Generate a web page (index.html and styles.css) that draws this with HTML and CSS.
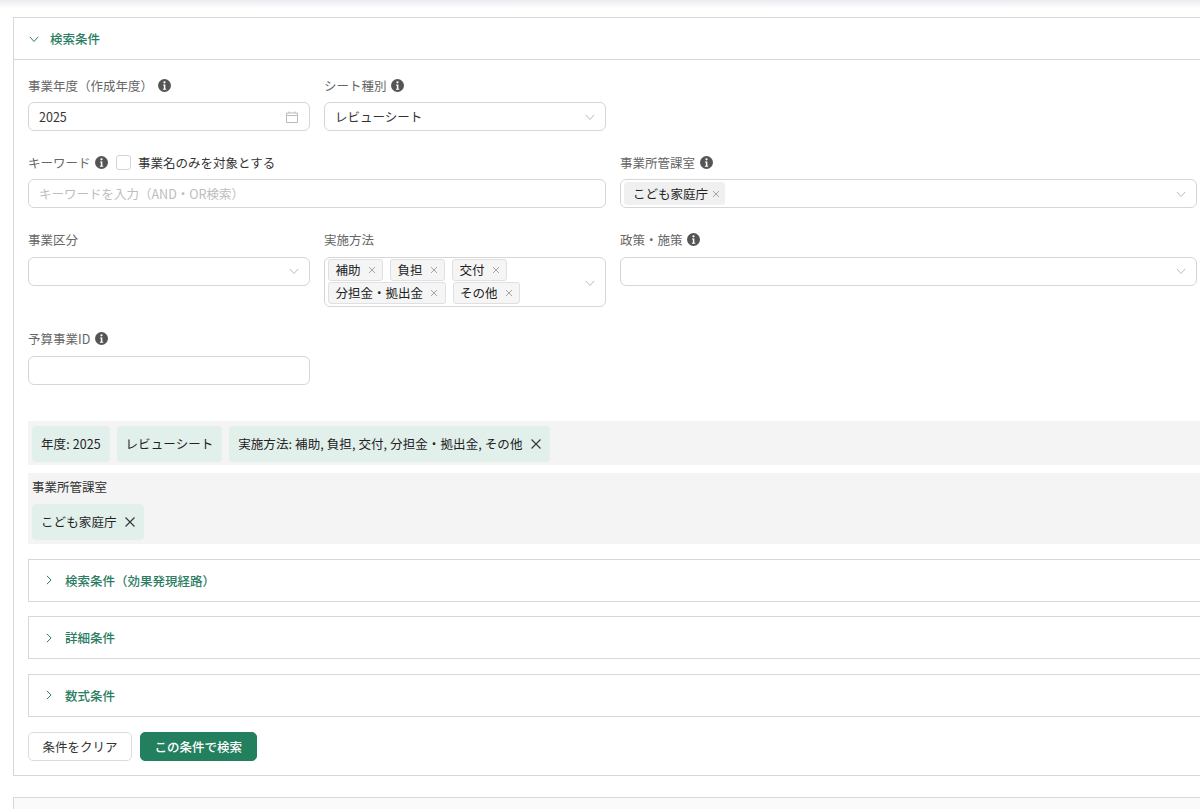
FILE: index.html
```html
<!DOCTYPE html>
<html lang="ja">
  <head>
    <meta charset="UTF-8" />
    <meta name="viewport" content="width=device-width, initial-scale=1.0" />
    <title>検索条件</title>
    <link rel="stylesheet" href="styles.css">
  </head>
  <body>
    <svg class="icon-defs" width="0" height="0">
      <defs>
        <symbol id="info" viewBox="0 0 12 12">
          <circle cx="6" cy="6" r="6" fill="#555"/>
          <circle cx="6" cy="3.1" r="1.05" fill="#fff"/>
          <path d="M4.6 5h2.2v3.9h.8V10H4.5V8.900h.9V6.100h-.8z" fill="#fff"/>
        </symbol>
        <symbol id="down" viewBox="0 0 12 12">
          <path d="M1 3.500l5 5.500 5-5.500" fill="none" stroke="currentColor" stroke-width="1.200"/>
        </symbol>
        <symbol id="right" viewBox="0 0 12 12">
          <path d="M3.500 1l5 5-5 5" fill="none" stroke="currentColor" stroke-width="1.200"/>
        </symbol>
        <symbol id="close" viewBox="0 0 12 12">
          <path d="M1.500 1.500l9 9M10.500 1.500l-9 9" fill="none" stroke="currentColor" stroke-width="1.100"/>
        </symbol>
      </defs>
    </svg>

    <div class="top-shade"></div>

    <section class="panel">
      <div class="panel-head">
        <svg class="head-arrow"><use href="#down"/></svg>
        <span>検索条件</span>
      </div>

      <div class="panel-body">
        <div class="form-grid">
          <div class="field">
            <div class="label">事業年度（作成年度）<svg class="info"><use href="#info"/></svg></div>
            <div class="input">
              <span class="value">2025</span>
              <svg class="calendar" viewBox="0 0 12 12">
                <path d="M.5 2h11v9.500H.5zM.5 4.500h11M3 .5V2M9 .5V2" fill="none" stroke="currentColor"/>
              </svg>
            </div>
          </div>
          <div class="field">
            <div class="label">シート種別<svg class="info"><use href="#info"/></svg></div>
            <div class="input">
              <span class="value">レビューシート</span>
              <svg class="caret"><use href="#down"/></svg>
            </div>
          </div>
          <div class="field-spacer"></div>

          <div class="field span-2">
            <div class="label">
              キーワード<svg class="info"><use href="#info"/></svg>
              <span class="checkbox"></span>
              <span class="check-text">事業名のみを対象とする</span>
            </div>
            <div class="input">
              <span class="placeholder">キーワードを入力（AND・OR検索）</span>
            </div>
          </div>
          <div class="field">
            <div class="label">事業所管課室<svg class="info"><use href="#info"/></svg></div>
            <div class="input input-tag">
              <span class="tag-soft">こども家庭庁<svg class="tag-x"><use href="#close"/></svg></span>
              <svg class="caret"><use href="#down"/></svg>
            </div>
          </div>

          <div class="field">
            <div class="label">事業区分</div>
            <div class="input">
              <svg class="caret"><use href="#down"/></svg>
            </div>
          </div>
          <div class="field">
            <div class="label">実施方法</div>
            <div class="input input-multi">
              <div class="tags">
                <span class="tag">補助<svg class="tag-x"><use href="#close"/></svg></span>
                <span class="tag">負担<svg class="tag-x"><use href="#close"/></svg></span>
                <span class="tag">交付<svg class="tag-x"><use href="#close"/></svg></span>
                <span class="tag">分担金・拠出金<svg class="tag-x"><use href="#close"/></svg></span>
                <span class="tag">その他<svg class="tag-x"><use href="#close"/></svg></span>
              </div>
              <svg class="caret"><use href="#down"/></svg>
            </div>
          </div>
          <div class="field">
            <div class="label">政策・施策<svg class="info"><use href="#info"/></svg></div>
            <div class="input">
              <svg class="caret"><use href="#down"/></svg>
            </div>
          </div>

          <div class="field">
            <div class="label">予算事業ID<svg class="info"><use href="#info"/></svg></div>
            <div class="input"></div>
          </div>
        </div>

        <div class="chip-bar">
          <span class="chip">年度: 2025</span>
          <span class="chip">レビューシート</span>
          <span class="chip">実施方法: 補助, 負担, 交付, 分担金・拠出金, その他<svg class="chip-x"><use href="#close"/></svg></span>
        </div>
        <div class="chip-group">
          <div class="chip-title">事業所管課室</div>
          <span class="chip">こども家庭庁<svg class="chip-x"><use href="#close"/></svg></span>
        </div>

        <div class="sub-panel">
          <svg class="sub-arrow"><use href="#right"/></svg>
          <span>検索条件（効果発現経路）</span>
        </div>
        <div class="sub-panel">
          <svg class="sub-arrow"><use href="#right"/></svg>
          <span>詳細条件</span>
        </div>
        <div class="sub-panel">
          <svg class="sub-arrow"><use href="#right"/></svg>
          <span>数式条件</span>
        </div>

        <div class="buttons">
          <button class="btn">条件をクリア</button>
          <button class="btn btn-primary">この条件で検索</button>
        </div>
      </div>
    </section>

    <section class="panel-next"></section>
  </body>
</html>
```

FILE: styles.css
```css
html,
body {
  height: 100%;
  overflow: hidden;
}

body {
  margin: 0;
  background: #fff;
  color: #333;
  font-family: "Noto Sans CJK JP", "Noto Sans", sans-serif;
  font-size: 12.5px;
}

.icon-defs {
  display: block;
  height: 0;
}

.top-shade {
  height: 8px;
  margin-bottom: 9px;
  background: linear-gradient(#ebecf0, #fff);
}

.panel {
  width: 1300px;
  margin-left: 13px;
  border: 1px solid #d8d8d8;
  box-sizing: border-box;
}

.panel-head {
  display: flex;
  align-items: center;
  height: 41px;
  padding-left: 15px;
  border-bottom: 1px solid #d8d8d8;
  color: #2a7d62;
  font-weight: 500;
}

.head-arrow {
  width: 10px;
  height: 10px;
  margin-right: 11px;
}

.panel-body {
  padding: 15px 14px 14px;
}

.form-grid {
  display: grid;
  grid-template-columns: 282px 282px 577px;
  column-gap: 14px;
  row-gap: 21.4px;
  align-items: start;
}

.span-2 {
  grid-column: span 2;
}

.label {
  display: flex;
  align-items: center;
  height: 20px;
  margin-bottom: 7px;
  color: #666;
  white-space: nowrap;
}

.info {
  width: 13px;
  height: 13px;
  margin-left: 4.5px;
}

.checkbox {
  width: 13px;
  height: 13px;
  margin: 0 7px 0 8px;
  border: 1px solid #d4d4d4;
  border-radius: 3px;
  background: #fff;
}

.check-text {
  color: #333;
}

.input {
  position: relative;
  display: flex;
  align-items: center;
  box-sizing: border-box;
  height: 29px;
  padding: 0 10px;
  border: 1px solid #d6d6d6;
  border-radius: 6px;
  background: #fff;
}

.value {
  color: #333;
}

.placeholder {
  color: #bdbdbd;
}

.calendar {
  width: 12px;
  height: 12px;
  margin-left: auto;
  margin-right: 1px;
  color: #bbb;
}

.caret {
  width: 10px;
  height: 10px;
  margin-left: auto;
  color: #bbb;
}

.input-tag {
  padding-left: 3px;
}

.tag-soft {
  display: flex;
  align-items: center;
  height: 23px;
  padding: 0 5px 0 9px;
  border-radius: 3px;
  background: #f0f0f0;
  color: #222;
}

.tag-soft .tag-x {
  margin-left: 4px;
}

.input-multi {
  height: 50.5px;
  padding: 1px 10px 0 3px;
  align-items: flex-start;
}

.input-multi .caret {
  margin-top: 19px;
}

.tags {
  display: flex;
  flex-wrap: wrap;
  align-content: flex-start;
  gap: 1px 7px;
  width: 220px;
}

.tag {
  display: flex;
  align-items: center;
  box-sizing: border-box;
  height: 22px;
  padding: 0 6.5px;
  border: 1px solid #e0e0e0;
  border-radius: 3px;
  background: #f5f5f5;
  color: #222;
  white-space: nowrap;
}

.tag-x {
  width: 8px;
  height: 8px;
  margin-left: 7px;
  color: #888;
}

.chip-bar {
  display: flex;
  gap: 7px;
  margin-top: 36px;
  padding: 5px 4px;
  height: 44px;
  box-sizing: border-box;
  background: #f4f4f4;
}

.chip {
  display: inline-flex;
  align-items: center;
  height: 36px;
  box-sizing: border-box;
  padding: 0 8.7px 0 9px;
  border-radius: 4px;
  background: #e2f0ec;
  color: #222;
  letter-spacing: .1px;
  white-space: nowrap;
}

.chip-x {
  width: 12px;
  height: 12px;
  margin-left: 7px;
  color: #333;
}

.chip-group {
  margin-top: 8px;
  margin-bottom: 15.2px;
  padding: 5px 4px 4px;
  background: #f4f4f4;
}

.chip-title {
  height: 18px;
  margin-bottom: 8px;
  line-height: 18px;
  color: #333;
}

.sub-panel {
  display: flex;
  align-items: center;
  box-sizing: border-box;
  height: 43px;
  margin-top: 14.5px;
  padding-left: 15px;
  border: 1px solid #d8d8d8;
  color: #2a7d62;
  font-weight: 500;
}

.sub-arrow {
  width: 10px;
  height: 10px;
  margin-right: 11px;
  color: #2a7d62;
}

.buttons {
  display: flex;
  gap: 8px;
  margin-top: 15px;
}

.btn {
  box-sizing: border-box;
  height: 29px;
  padding: 0 13.5px;
  border: 1px solid #dcdcdc;
  border-radius: 5px;
  background: #fff;
  color: #333;
  font-family: inherit;
  font-size: 12.5px;
}

.btn-primary {
  border-color: #23805f;
  background: #23805f;
  color: #fff;
  font-weight: 500;
}

.panel-next {
  width: 1300px;
  height: 40px;
  margin: 21px 0 0 13px;
  border: 1px solid #d8d8d8;
  background: #fafafa;
}
```
